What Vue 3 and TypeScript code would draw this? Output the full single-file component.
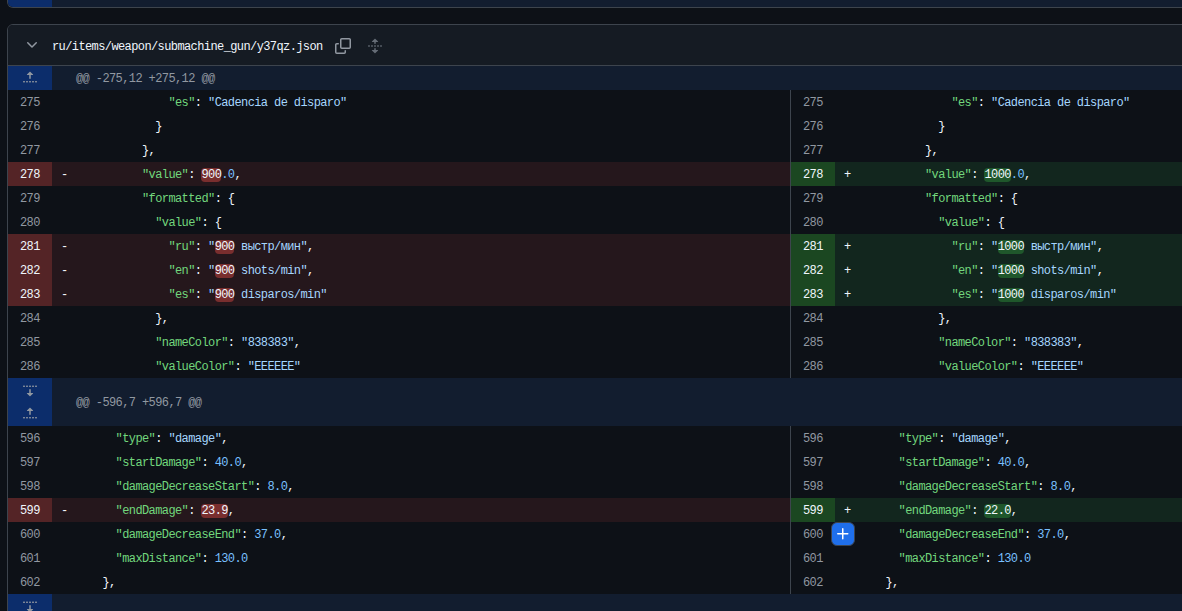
<script setup lang="ts">
type Kind = 'ctx' | 'del' | 'add'
interface Tok { t: string; c: string; w?: boolean }
interface Cell { n: number; k: Kind; toks: Tok[] }
interface Row { id: string; hunk?: string; tall?: boolean; left?: Cell; right?: Cell }

const FOLD_UP = 'M7.823 1.677 4.927 4.573A.25.25 0 0 0 5.104 5H7.25v3.236a.75.75 0 1 0 1.5 0V5h2.146a.25.25 0 0 0 .177-.427L8.177 1.677a.25.25 0 0 0-.354 0ZM13.75 11a.75.75 0 0 0 0 1.5h.5a.75.75 0 0 0 0-1.5h-.5Zm-3.75.75a.75.75 0 0 1 .75-.75h.5a.75.75 0 0 1 0 1.5h-.5a.75.75 0 0 1-.75-.75ZM7.75 11a.75.75 0 0 0 0 1.5h.5a.75.75 0 0 0 0-1.5h-.5ZM4 11.75a.75.75 0 0 1 .75-.75h.5a.75.75 0 0 1 0 1.5h-.5a.75.75 0 0 1-.75-.75ZM1.75 11a.75.75 0 0 0 0 1.5h.5a.75.75 0 0 0 0-1.5h-.5Z'
const FOLD_DOWN = 'm8.177 14.323 2.896-2.896a.25.25 0 0 0-.177-.427H8.75V7.764a.75.75 0 1 0-1.5 0V11H5.104a.25.25 0 0 0-.177.427l2.896 2.896a.25.25 0 0 0 .354 0ZM2.25 5a.75.75 0 0 0 0-1.5h-.5a.75.75 0 0 0 0 1.5h.5ZM6 4.25a.75.75 0 0 1-.75.75h-.5a.75.75 0 0 1 0-1.5h.5a.75.75 0 0 1 .75.75ZM8.25 5a.75.75 0 0 0 0-1.5h-.5a.75.75 0 0 0 0 1.5h.5ZM12 4.25a.75.75 0 0 1-.75.75h-.5a.75.75 0 0 1 0-1.5h.5a.75.75 0 0 1 .75.75Zm2.25.75a.75.75 0 0 0 0-1.5h-.5a.75.75 0 0 0 0 1.5h.5Z'

const p = (t: string): Tok => ({ t, c: 'pun' })
const e = (t: string): Tok => ({ t, c: 'ent' })
const s = (t: string): Tok => ({ t, c: 'str' })
const v = (t: string): Tok => ({ t, c: 'val' })
const x = (t: string): Tok => ({ t, c: 'wrd', w: true })
const ind = (n: number) => ' '.repeat(n)

function both(n: number, toks: Tok[]): Pick<Row, 'id' | 'left' | 'right'> {
  return { id: 'r' + n, left: { n, k: 'ctx', toks }, right: { n, k: 'ctx', toks } }
}
function diff(n: number, a: Tok[], b: Tok[]): Pick<Row, 'id' | 'left' | 'right'> {
  return { id: 'r' + n, left: { n, k: 'del', toks: a }, right: { n, k: 'add', toks: b } }
}
function speed(key: string, old: string, neu: string, rest: string, n: number, tail: string) {
  return diff(
    n,
    [p(ind(14)), e(`"${key}"`), p(': '), s('"'), x(old), s(` ${rest}"`), p(tail)],
    [p(ind(14)), e(`"${key}"`), p(': '), s('"'), x(neu), s(` ${rest}"`), p(tail)]
  )
}

const rows: Row[] = [
  { id: 'h1', hunk: '@@ -275,12 +275,12 @@' },
  both(275, [p(ind(14)), e('"es"'), p(': '), s('"Cadencia de disparo"')]),
  both(276, [p(ind(12) + '}')]),
  both(277, [p(ind(10) + '},')]),
  diff(
    278,
    [p(ind(10)), e('"value"'), p(': '), x('900'), v('.0'), p(',')],
    [p(ind(10)), e('"value"'), p(': '), x('1000'), v('.0'), p(',')]
  ),
  both(279, [p(ind(10)), e('"formatted"'), p(': {')]),
  both(280, [p(ind(12)), e('"value"'), p(': {')]),
  speed('ru', '900', '1000', 'выстр/мин', 281, ','),
  speed('en', '900', '1000', 'shots/min', 282, ','),
  speed('es', '900', '1000', 'disparos/min', 283, ''),
  both(284, [p(ind(12) + '},')]),
  both(285, [p(ind(12)), e('"nameColor"'), p(': '), s('"838383"'), p(',')]),
  both(286, [p(ind(12)), e('"valueColor"'), p(': '), s('"EEEEEE"')]),
  { id: 'h2', hunk: '@@ -596,7 +596,7 @@', tall: true },
  both(596, [p(ind(6)), e('"type"'), p(': '), s('"damage"'), p(',')]),
  both(597, [p(ind(6)), e('"startDamage"'), p(': '), v('40.0'), p(',')]),
  both(598, [p(ind(6)), e('"damageDecreaseStart"'), p(': '), v('8.0'), p(',')]),
  diff(
    599,
    [p(ind(6)), e('"endDamage"'), p(': '), x('23.9'), p(',')],
    [p(ind(6)), e('"endDamage"'), p(': '), x('22.0'), p(',')]
  ),
  both(600, [p(ind(6)), e('"damageDecreaseEnd"'), p(': '), v('37.0'), p(',')]),
  both(601, [p(ind(6)), e('"maxDistance"'), p(': '), v('130.0')]),
  both(602, [p(ind(4) + '},')]),
  { id: 'h3', hunk: '' }
]

const marker: Record<Kind, string> = { ctx: '', del: '-', add: '+' }
const sides = ['left', 'right'] as const
</script>

<template>
  <div class="page">
    <section class="prev-card">
      <div class="hunk-row">
        <div class="hunk-num">
          <svg class="fold" viewBox="0 0 16 16" aria-hidden="true"><path :d="FOLD_UP" /></svg>
        </div>
      </div>
    </section>

    <section class="card">
      <header class="file-head">
        <svg class="chev" viewBox="0 0 16 16" aria-hidden="true">
          <path d="M12.78 5.22a.749.749 0 0 1 0 1.06l-4.25 4.25a.749.749 0 0 1-1.06 0L3.22 6.28a.749.749 0 1 1 1.06-1.06L8 8.939l3.72-3.719a.749.749 0 0 1 1.06 0Z" />
        </svg>
        <span class="file-name">ru/items/weapon/submachine_gun/y37qz.json</span>
        <svg class="copy" viewBox="0 0 16 16" aria-hidden="true">
          <path d="M0 6.75C0 5.784.784 5 1.75 5h1.5a.75.75 0 0 1 0 1.5h-1.5a.25.25 0 0 0-.25.25v7.5c0 .138.112.25.25.25h7.5a.25.25 0 0 0 .25-.25v-1.5a.75.75 0 0 1 1.5 0v1.5A1.75 1.75 0 0 1 9.25 16h-7.5A1.75 1.75 0 0 1 0 14.25Z" />
          <path d="M5 1.75C5 .784 5.784 0 6.75 0h7.5C15.216 0 16 .784 16 1.75v7.5A1.75 1.75 0 0 1 14.25 11h-7.5A1.75 1.75 0 0 1 5 9.25Zm1.75-.25a.25.25 0 0 0-.25.25v7.5c0 .138.112.25.25.25h7.5a.25.25 0 0 0 .25-.25v-7.5a.25.25 0 0 0-.25-.25Z" />
        </svg>
        <svg class="unfold" viewBox="0 0 16 16" aria-hidden="true">
          <path d="m8.177.677 2.896 2.896a.25.25 0 0 1-.177.427H8.75v1.25a.75.75 0 0 1-1.5 0V4H5.104a.25.25 0 0 1-.177-.427L7.823.677a.25.25 0 0 1 .354 0ZM7.25 10.75a.75.75 0 0 1 1.5 0V12h2.146a.25.25 0 0 1 .177.427l-2.896 2.896a.25.25 0 0 1-.354 0l-2.896-2.896A.25.25 0 0 1 5.104 12H7.25v-1.25Zm-5-2a.75.75 0 0 0 0-1.5h-.5a.75.75 0 0 0 0 1.5h.5ZM6 8a.75.75 0 0 1-.75.75h-.5a.75.75 0 0 1 0-1.5h.5A.75.75 0 0 1 6 8Zm2.25.75a.75.75 0 0 0 0-1.5h-.5a.75.75 0 0 0 0 1.5h.5ZM12 8a.75.75 0 0 1-.75.75h-.5a.75.75 0 0 1 0-1.5h.5A.75.75 0 0 1 12 8Zm2.25.75a.75.75 0 0 0 0-1.5h-.5a.75.75 0 0 0 0 1.5h.5Z" />
        </svg>
      </header>

      <div class="diff">
        <template v-for="row in rows" :key="row.id">
          <div v-if="row.hunk !== undefined" class="hunk-row" :class="{ tall: row.tall }">
            <div class="hunk-num">
              <svg v-if="row.tall" class="fold" viewBox="0 0 16 16" aria-hidden="true"><path :d="FOLD_DOWN" /></svg>
              <svg class="fold" viewBox="0 0 16 16" aria-hidden="true"><path :d="row.id === 'h3' ? FOLD_DOWN : FOLD_UP" /></svg>
            </div>
            <div class="hunk-text">{{ row.hunk }}</div>
          </div>
          <div v-else class="code-row">
            <div v-for="side in sides" :key="side" class="side" :class="[side, row[side]!.k]">
              <div class="num">{{ row[side]!.n }}</div>
              <div class="mark">{{ marker[row[side]!.k] }}</div>
              <div class="code"><span v-for="(tok, i) in row[side]!.toks" :key="i" :class="tok.c">{{ tok.t }}</span></div>
              <button v-if="side === 'right' && row[side]!.n === 600" class="add-btn" type="button" aria-label="Add comment">
                <svg viewBox="0 0 16 16" aria-hidden="true">
                  <path d="M7.75 2a.75.75 0 0 1 .75.75V7h4.25a.75.75 0 0 1 0 1.5H8.5v4.25a.75.75 0 0 1-1.5 0V8.5H2.75a.75.75 0 0 1 0-1.5H7V2.75A.75.75 0 0 1 7.75 2Z" />
                </svg>
              </button>
            </div>
          </div>
        </template>
      </div>
    </section>
  </div>
</template>

<style>
html,
body {
  margin: 0;
  background: #0d1117;
  overflow: hidden;
}
</style>

<style scoped>
.page {
  width: 1182px;
  height: 611px;
  overflow: hidden;
  background: #0d1117;
  font-family: "Liberation Mono", "DejaVu Sans Mono", monospace;
  font-size: 12px;
  letter-spacing: -0.6px;
  color: #f0f6fc;
}
.prev-card {
  box-sizing: border-box;
  width: 1600px;
  height: 8px;
  margin-left: 7px;
  border: 1px solid #3d444d;
  border-top: 0;
  border-radius: 0 0 6px 6px;
  overflow: hidden;
  background: #121d2f;
}
.prev-card .hunk-row {
  margin-top: -17px;
}
.card {
  box-sizing: border-box;
  width: 1600px;
  margin: 16px 0 0 7px;
  border: 1px solid #3d444d;
  border-radius: 6px 6px 0 0;
  overflow: hidden;
  background: #0d1117;
}
.file-head {
  box-sizing: border-box;
  height: 41px;
  display: flex;
  align-items: center;
  padding-left: 16px;
  background: #151b23;
  border-bottom: 1px solid #3d444d;
}
.chev {
  width: 16px;
  height: 16px;
  fill: #9198a1;
}
.file-name {
  margin-left: 12px;
  color: #f0f6fc;
  white-space: pre;
  line-height: 20px;
  padding-top: 4px;
}
.copy {
  width: 16px;
  height: 16px;
  margin: 1px 0 0 12px;
  fill: #9198a1;
}
.unfold {
  width: 16px;
  height: 16px;
  margin: 1px 0 0 16px;
  fill: #656c76;
}
.hunk-row {
  display: flex;
  height: 24px;
  background: #121d2f;
}
.hunk-row.tall {
  height: 48px;
}
.hunk-num {
  flex: none;
  width: 44px;
  background: #0c2d6b;
  display: flex;
  flex-direction: column;
  align-items: center;
  justify-content: center;
  gap: 8px;
}
.fold {
  width: 16px;
  height: 16px;
  fill: #9198a1;
}
.hunk-text {
  padding: 2px 0 0 24px;
  color: #9198a1;
  white-space: pre;
  display: flex;
  align-items: center;
}
.code-row {
  display: grid;
  grid-template-columns: 782px 1fr;
  height: 24px;
}
.side {
  position: relative;
  display: grid;
  grid-template-columns: 44px 24px 1fr;
  grid-template-rows: 24px;
  line-height: 26px;
  height: 24px;
}
.side.right {
  border-left: 1px solid #3d444d;
}
.num {
  box-sizing: border-box;
  padding-left: 12px;
  color: #9198a1;
}
.mark {
  padding-left: 9px;
  color: #f0f6fc;
}
.code {
  white-space: pre;
}
.del {
  background: #25171c;
}
.del .num {
  background: #542426;
  color: #f0f6fc;
}
.add {
  background: #12261e;
}
.add .num {
  background: #1b4721;
  color: #f0f6fc;
}
.ent {
  color: #72d77d;
}
.str {
  color: #a5d6ff;
}
.val {
  color: #79c0ff;
}
.pun {
  color: #f0f6fc;
}
.wrd {
  color: #f0f6fc;
  border-radius: 4px;
  padding: 0;
}
.del .wrd {
  background: #792e2e;
}
.add .wrd {
  background: #1f572b;
}
.add-btn {
  position: absolute;
  left: 40px;
  top: 0;
  width: 24px;
  height: 24px;
  padding: 0;
  border: 1px solid #3d444d;
  border-radius: 6px;
  background: #1f6feb;
  display: flex;
  align-items: center;
  justify-content: center;
}
.add-btn svg {
  width: 16px;
  height: 16px;
  fill: #ffffff;
}
</style>
